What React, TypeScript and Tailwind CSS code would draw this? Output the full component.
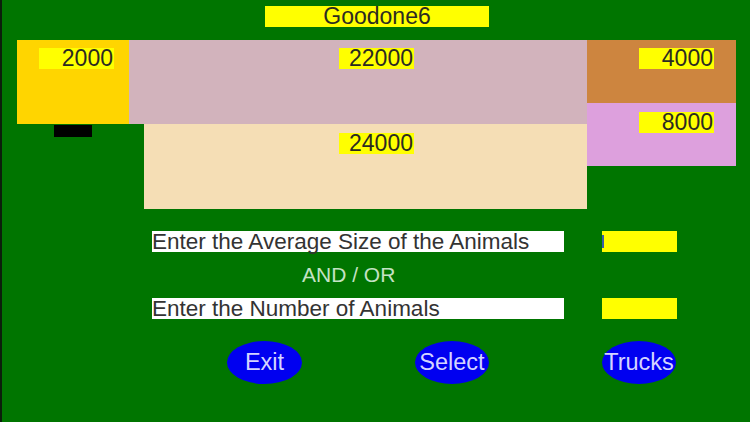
import React from 'react';

const Amount = ({ value }: { value: string }) => (
    <div className="w-[75px] h-[21px] bg-[#ffff00] text-right pr-[1px] text-[23px] leading-[21px] text-[#2b2b22]">{value}</div>
);

const Pill = ({ label, width }: { label: string; width: string }) => (
    <button className={`${width} h-[43px] rounded-[50%] bg-[#0000f0] text-[23.5px] text-[#d4d4ff] flex items-center justify-center whitespace-nowrap`}>{label}</button>
);

export default function App() {
    return (
        <div className="w-[750px] h-[422px] overflow-hidden bg-[#007500] border-l-2 border-[#0b1f0b] flex flex-col font-['Liberation_Sans',Arial,sans-serif]">
            {/* title */}
            <div className="mt-[6px] ml-[263px] w-[224px] h-[21px] bg-[#ffff00] text-center text-[23px] leading-[21px] text-[#2b2b22]">Goodone6</div>

            {/* boxes */}
            <div className="mt-[13px] ml-[15px] flex">
                <div className="w-[112px] flex flex-col">
                    <div className="h-[84px] bg-[#ffd500] pt-[8px] pl-[22px]">
                        <Amount value="2000" />
                    </div>
                    <div className="mt-[1px] ml-[37px] w-[38px] h-[12px] bg-black"></div>
                </div>
                <div className="w-[458px] flex flex-col">
                    <div className="h-[84px] bg-[#d2b3bc] pt-[8px] pl-[210px]">
                        <Amount value="22000" />
                    </div>
                    <div className="ml-[15px] h-[85px] bg-[#f5deb5] pt-[9px] pl-[195px]">
                        <Amount value="24000" />
                    </div>
                </div>
                <div className="w-[149px] flex flex-col">
                    <div className="h-[63px] bg-[#cd853f] pt-[8px] pl-[52px]">
                        <Amount value="4000" />
                    </div>
                    <div className="h-[63px] bg-[#dda0dd] pt-[9px] pl-[52px]">
                        <Amount value="8000" />
                    </div>
                </div>
            </div>

            {/* inputs */}
            <div className="mt-[22px] ml-[150px] flex gap-[38px]">
                <div className="w-[412px] h-[21px] bg-white text-[22.5px] leading-[21px] text-[#333] whitespace-nowrap">Enter the Average Size of the Animals</div>
                <div className="w-[75px] h-[21px] bg-[#ffff00] pt-[4px]">
                    <div className="w-[2px] h-[13px] bg-[#3a5fa8]"></div>
                </div>
            </div>
            <div className="mt-[12px] ml-[300px] h-[21px] text-[21px] leading-[21px] text-[#c4e2c4]">AND / OR</div>
            <div className="mt-[13px] ml-[150px] flex gap-[38px]">
                <div className="w-[412px] h-[21px] bg-white text-[22.5px] leading-[21px] text-[#333] whitespace-nowrap">Enter the Number of Animals</div>
                <div className="w-[75px] h-[21px] bg-[#ffff00]"></div>
            </div>

            {/* buttons */}
            <div className="mt-[22px] ml-[225px] flex gap-[113px]">
                <Pill label="Exit" width="w-[75px]" />
                <Pill label="Select" width="w-[74px]" />
                <Pill label="Trucks" width="w-[74px]" />
            </div>
        </div>
    );
}
